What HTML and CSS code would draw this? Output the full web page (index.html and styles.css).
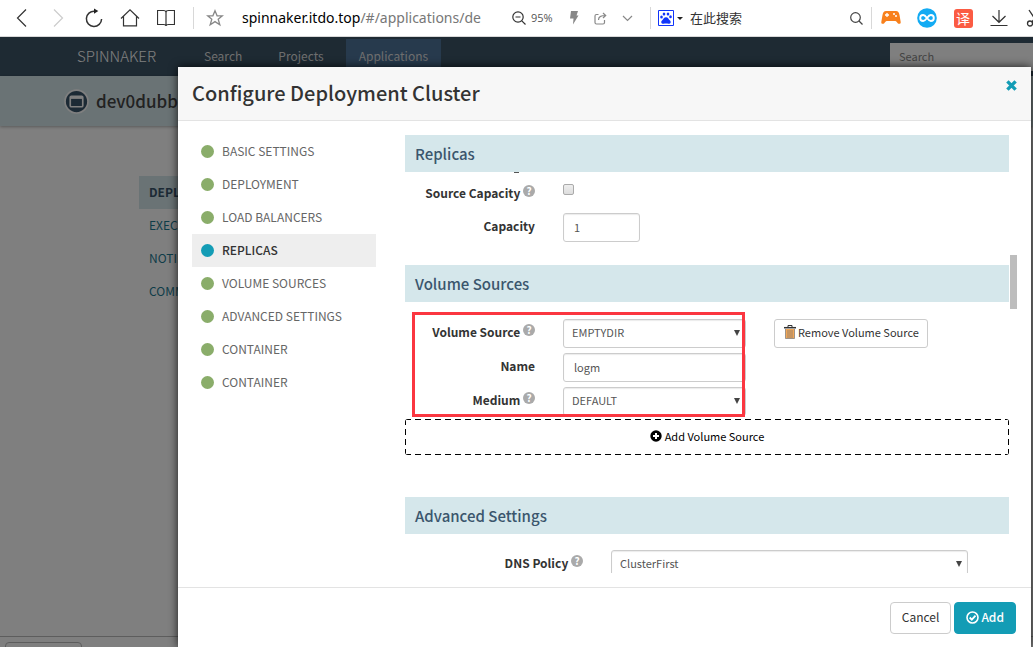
FILE: index.html
```html
<!DOCTYPE html>
<html lang="en">
<head>
<meta charset="utf-8">
<title>Configure Deployment Cluster</title>
<link rel="stylesheet" href="styles.css">
</head>
<body>
<header class="browser">
  <button class="tool" aria-label="Back"><svg width="18" height="20" viewBox="0 0 18 20"><path d="M13 1.500 4.500 10l8.500 8.500"/></svg></button>
  <button class="tool tool-off" aria-label="Forward"><svg width="18" height="20" viewBox="0 0 18 20"><path d="m5 1.500 8.500 8.500L5 18.500"/></svg></button>
  <button class="tool" aria-label="Reload"><svg width="20" height="20" viewBox="0 0 20 20"><path stroke-width="1.500" d="M10.500 3.200A7.600 7.600 0 1 0 17.600 11"/><path class="solid" d="M10 .5v5.300L14.300 3z"/></svg></button>
  <button class="tool" aria-label="Home"><svg width="20" height="20" viewBox="0 0 20 20"><path d="M1 10.500 10 1.800l9 8.700M3.500 8.500v9.300h13V8.500"/></svg></button>
  <button class="tool" aria-label="Reading list"><svg width="18" height="20" viewBox="0 0 18 20"><path d="M.5 2.500h6Q9 2.500 9 4.500 9 2.500 11.500 2.500h6v14h-6Q9 16.500 9 18 9 16.500 6.500 16.500h-6zM9 4v14"/></svg></button>
  <span class="divider"></span>
  <button class="tool tool-gray tool-star" aria-label="Bookmark"><svg width="18" height="18" viewBox="0 0 18 18"><path stroke-width="1.300" d="m9 1.800 2.100 5h5.300l-4.200 3.500 1.600 5.500L9 12.600l-4.800 3.200 1.600-5.500L1.600 6.800h5.300z"/></svg></button>
  <div class="address" role="textbox" aria-label="Address" tabindex="0">spinnaker.itdo.top<span class="path">/#/applications/de</span></div>
  <button class="zoom"><svg width="14" height="14" viewBox="0 0 14 14"><circle cx="6" cy="6" r="5.200"/><path d="m9.800 9.800 3.700 3.700M3.500 6h5"/></svg>95%</button>
  <button class="mini" aria-label="Fast mode"><svg width="12" height="14" viewBox="0 0 12 14"><path class="solid-gray" d="M3 0h7L8.500 4.500h2L5 13.500l.5-6H2z"/></svg></button>
  <button class="mini" aria-label="Share"><svg width="13" height="13" viewBox="0 0 13 13"><path d="M4.500 2.500h-2Q1 2.500 1 4v6.500Q1 12 2.500 12H9q1.500 0 1.500-1.500V8M4.500 8Q4.500 3.500 11.500 3.500M9 1l2.700 2.500L9 6"/></svg></button>
  <button class="mini" aria-label="More"><svg width="11" height="7" viewBox="0 0 11 7"><path d="m1 1 4.500 4.500L10 1"/></svg></button>
  <span class="divider"></span>
  <button class="engine" aria-label="Search engine"><svg width="16" height="16" viewBox="0 0 16 16"><path fill="#fff" stroke="#1034fa" d="M.5.5h15v15H.5z"/><g fill="#1034fa"><ellipse cx="3.500" cy="7" rx="1.300" ry="1.500"/><ellipse cx="6" cy="4" rx="1.300" ry="1.600"/><ellipse cx="10" cy="4" rx="1.300" ry="1.600"/><ellipse cx="12.500" cy="6.800" rx="1.300" ry="1.500"/><path d="M8 7.200c2 0 2.500 1.800 4 3.300 1.500 1.700.5 3.500-1.500 3.300-2-.3-3-.3-5 0C3.500 14 2.500 12 4 10.500 5.500 9 6 7.200 8 7.200z"/></g></svg><i class="caret"></i></button>
  <input class="web-search" type="text" placeholder="在此搜索" aria-label="在此搜索">
  <button class="mini find" aria-label="Find"><svg width="13" height="13" viewBox="0 0 13 13"><circle cx="5.500" cy="5.500" r="4.800"/><path d="m9 9 3.500 3.500"/></svg></button>
  <span class="divider divider-end"></span>
  <button class="ext" aria-label="Games"><svg width="20" height="16" viewBox="0 0 20 16"><path fill="#f8801c" d="M5 1h10c2 0 3 1.500 3.500 4l1.200 7c.3 2-2 2.500-3.200 1-1-1.500-1.500-2-3-2h-7c-1.500 0-2 .5-3 2-1.200 1.500-3.500 1-3.200-1L1.500 5C2 2.500 3 1 5 1z"/><path stroke="#fff" stroke-width="1.300" d="M4 5h4M6 3v4"/><circle cx="13" cy="4" r="1" fill="#fff"/><circle cx="15" cy="6" r="1" fill="#fff"/></svg></button>
  <button class="ext" aria-label="Sync"><svg width="20" height="20" viewBox="0 0 20 20"><circle cx="10" cy="10" r="9.800" fill="#13abf3"/><path fill="none" stroke="#fff" stroke-width="1.900" d="M10 10C8.500 8 7.500 7 6.200 7a3 3 0 0 0 0 6C7.500 13 8.500 12 10 10s2.500-3 3.800-3a3 3 0 0 1 0 6c-1.300 0-2.300-1-3.800-3z"/></svg></button>
  <button class="ext"><span class="translate">译</span></button>
  <button class="ext" aria-label="Downloads"><svg width="18" height="18" viewBox="0 0 18 18"><path d="M9 1v12M2.500 7 9 13.300 15.500 7M.5 16.500h17" fill="none" stroke="#333" stroke-width="1.200"/></svg></button>
  <button class="ext" aria-label="Screenshot"><svg width="20" height="20" viewBox="0 0 20 20"><path d="m4 2 8 12M16 2 7 14" fill="none" stroke="#333" stroke-width="1.300"/><circle cx="5" cy="15.500" r="2.500" fill="none" stroke="#333" stroke-width="1.300"/></svg></button>
</header>

<div class="page">
  <div class="app">
    <nav class="topbar">
      <a class="brand" href="#">SPINNAKER</a>
      <a class="top-link" href="#">Search</a>
      <a class="top-link" href="#">Projects</a>
      <a class="top-link top-active" href="#">Applications</a>
      <input class="top-search" type="text" placeholder="Search" aria-label="Search">
    </nav>
    <div class="app-head">
      <svg width="25" height="25" viewBox="0 0 24 24"><circle cx="12" cy="12" r="11" fill="#39546a" stroke="#fff" stroke-width="1.600"/><rect x="6" y="7" width="12" height="10" rx="1" fill="none" stroke="#fff" stroke-width="1.600"/><path stroke="#fff" stroke-width="2" d="M6 8.500h12"/></svg>
      <h2 class="app-name">dev0dubb</h2>
    </div>
    <nav class="side">
      <a class="side-link side-active" href="#">DEPLOYMENT</a>
      <a class="side-link" href="#">EXECUTION</a>
      <a class="side-link" href="#">NOTIFICATIONS</a>
      <a class="side-link" href="#">COMMENTS</a>
    </nav>
    <div class="app-foot"><span class="foot-box"></span></div>
  </div>
  <div class="backdrop"></div>

  <section class="modal" role="dialog" aria-labelledby="title">
    <header class="modal-head">
      <h1 class="modal-title" id="title">Configure Deployment Cluster</h1>
      <button class="close" aria-label="Close"><svg width="11" height="11" viewBox="0 0 11 11"><path stroke="#139cb5" stroke-width="3.400" d="m1.400 1.400 8.200 8.200M9.600 1.400 1.400 9.600"/></svg></button>
    </header>
    <div class="modal-body">
      <nav class="steps">
        <a class="step" href="#">BASIC SETTINGS</a>
        <a class="step" href="#">DEPLOYMENT</a>
        <a class="step" href="#">LOAD BALANCERS</a>
        <a class="step step-active" href="#">REPLICAS</a>
        <a class="step" href="#">VOLUME SOURCES</a>
        <a class="step" href="#">ADVANCED SETTINGS</a>
        <a class="step" href="#">CONTAINER</a>
        <a class="step" href="#">CONTAINER</a>
      </nav>
      <div class="scroller">
        <h3 class="section">Replicas</h3>
        <div class="fields replicas">
          <label class="label" for="source-cap">Source Capacity <span class="help">?</span></label>
          <div class="control check"><input class="tick" type="checkbox" id="source-cap"></div>
          <label class="label" for="cap">Capacity</label>
          <div class="control"><input class="box box-short" type="text" id="cap" value="1"></div>
        </div>
        <h3 class="section">Volume Sources</h3>
        <div class="volume">
          <div class="fields">
            <label class="label" for="vol">Volume Source <span class="help">?</span></label>
            <div class="control pick"><select class="box" id="vol"><option>EMPTYDIR</option></select></div>
            <button class="remove"><svg width="12" height="14" viewBox="0 0 12 14"><path fill="#f2a756" d="M1.500 4h9v9.500h-9z"/><path fill="none" stroke="#333" d="M4 2V.5h4V2"/><path fill="none" stroke="#777" stroke-width=".7" d="M1.500 4v9.500h9V4M4 5v8M6 5v8M8 5v8"/><path stroke="#333" stroke-width="1.500" d="M0 2.700h12"/></svg>Remove Volume Source</button>
          </div>
          <div class="fields">
            <label class="label" for="name">Name</label>
            <div class="control"><input class="box" type="text" id="name" value="logm"></div>
          </div>
          <div class="fields">
            <label class="label" for="medium">Medium <span class="help">?</span></label>
            <div class="control pick"><select class="box" id="medium"><option>DEFAULT</option></select></div>
          </div>
          <div class="marker"></div>
        </div>
        <button class="add-source"><svg width="12" height="12" viewBox="0 0 12 12"><circle cx="6" cy="6" r="5.700"/><path stroke="#fff" stroke-width="2" d="M6 3v6M3 6h6"/></svg>Add Volume Source</button>
        <h3 class="section">Advanced Settings</h3>
        <div class="dns">
          <label class="label" for="dns">DNS Policy <span class="help">?</span></label>
          <div class="control pick"><select class="box" id="dns"><option>ClusterFirst</option></select></div>
        </div>
        <div class="thumb"></div>
      </div>
    </div>
    <footer class="modal-foot">
      <button class="btn">Cancel</button>
      <button class="btn btn-main"><svg width="13" height="13" viewBox="0 0 13 13"><circle cx="6.500" cy="6.500" r="5.500" fill="none" stroke="#fff" stroke-width="1.600"/><path fill="none" stroke="#fff" stroke-width="1.800" d="m3.700 6.500 2.100 2.100 3.700-3.900"/></svg>Add</button>
    </footer>
  </section>
</div>
</body>
</html>
```

FILE: styles.css
```css
* { box-sizing: border-box; }

body {
  margin: 0;
  height: 100vh;
  overflow: hidden;
  display: flex;
  flex-direction: column;
  font: 12px/16px "Noto Sans CJK SC", "Open Sans", sans-serif;
  color: #333;
}

h1, h2, h3 { margin: 0; }
a { color: inherit; text-decoration: none; }
button { font: inherit; color: inherit; padding: 0; border: 0; background: none; }
svg { display: block; flex: none; }

/* browser toolbar */
.browser {
  display: flex;
  align-items: center;
  flex: none;
  height: 37px;
  padding-left: 4px;
  overflow: hidden;
  background: #fff;
  border-bottom: 1px solid #d8d8d8;
}
.tool {
  display: flex;
  flex: none;
  align-items: center;
  justify-content: center;
  width: 36px;
  height: 36px;
}
.tool svg, .mini svg, .zoom svg { fill: none; stroke: #333; stroke-width: 1.2; }
.tool-off svg { stroke: #ccc; }
.tool-gray svg { stroke: #888; }
.tool .solid { fill: #222; stroke: none; }
.divider { flex: none; width: 1px; height: 22px; margin-left: 9px; background: #d8d8d8; }
.tool-star { margin: 0 4px 0 3px; }
.address {
  flex: none;
  width: 270px;
  margin-left: 5px;
  overflow: hidden;
  white-space: nowrap;
  font: 14px/22px "Noto Sans", sans-serif;
  color: #000;
}
.path { color: #777; }
.zoom {
  display: flex;
  flex: none;
  align-items: center;
  gap: 5px;
  width: 48px;
  font: 11px/16px "Open Sans", sans-serif;
  color: #555;
}
.mini { display: flex; flex: none; justify-content: center; width: 27px; }
.mini svg { stroke: #888; }
.mini .solid-gray { fill: #888; stroke: none; }
.engine { display: flex; flex: none; align-items: center; gap: 3px; margin-left: 7px; }
.caret { border: 3px solid transparent; border-top-color: #222; border-bottom: 0; }
.web-search {
  flex: 1;
  min-width: 0;
  padding: 0 0 0 7px;
  border: 0;
  outline: 0;
  background: none;
  font: 13px/20px "Noto Sans CJK SC", sans-serif;
}
.web-search::placeholder { color: #333; }
.find svg { stroke: #444; }
.divider-end { margin: 0 1px; }
.ext { display: flex; flex: none; justify-content: center; width: 36px; }
.ext:last-child { margin-right: -20px; }
.translate {
  width: 19px;
  border-radius: 3px;
  background: #fb5b43;
  color: #fff;
  font-size: 14px;
  line-height: 19px;
}

/* dimmed application */
.page { position: relative; flex: 1; min-height: 0; overflow: hidden; }
.app { display: flex; flex-direction: column; height: 100%; background: #fff; }
.topbar { display: flex; flex: none; align-items: stretch; height: 39px; padding: 2px 0 0 77px; background: #3c5467; color: #fff; }
.brand { width: 109px; font-size: 15px; line-height: 33px; font-weight: 300; }
.top-link { padding: 0 18px; line-height: 33px; color: #ddd; }
.top-active { margin-left: 4px; padding: 0 13px; background: #4e749a; }
.top-search { width: 143px; height: 28px; margin: 4px 0 0 auto; padding: 0 9px 3px; border: 0; background: #fff; font: inherit; font-size: 11px; }
.top-search::placeholder { color: #888; }
.app-head {
  display: flex;
  flex: none;
  align-items: center;
  gap: 7px;
  height: 50px;
  padding-left: 64px;
  background: #d5e7eb;
  box-shadow: 0 1px 3px rgba(0, 0, 0, .3);
}
.app-name { font-size: 17px; line-height: 24px; font-weight: 500; color: #444; }
.side { display: flex; flex: 1; flex-direction: column; width: 39px; margin: 50px 0 0 139px; overflow: hidden; color: #1d7a92; }
.side-link { padding: 0 0 2px 10px; overflow: hidden; line-height: 31px; }
.side-active { background: #d5e7eb; color: #39546a; font-weight: 700; }
.app-foot { flex: none; height: 10px; padding: 5px; border-top: 1px solid #bbb; overflow: hidden; }
.foot-box { display: block; width: 77px; height: 20px; border: 1px solid #bbb; border-radius: 4px; }
.backdrop { position: absolute; inset: 0; background: rgba(0, 0, 0, .5); }

/* dialog */
.modal {
  position: absolute;
  inset: 30px 2px 0 178px;
  display: flex;
  flex-direction: column;
  background: #fff;
  border-radius: 2px 2px 0 0;
  box-shadow: 0 0 10px rgba(0, 0, 0, .8);
}
.modal-head {
  display: flex;
  flex: none;
  align-items: flex-start;
  justify-content: space-between;
  padding: 12px 14px 13px;
  background: #f7f7f7;
  border-bottom: 1px solid #e3e3e3;
}
.modal-title { font-size: 20px; line-height: 28px; font-weight: 500; }
.close { margin-top: 1px; }
.modal-body { display: flex; flex: 1; gap: 29px; min-height: 0; padding: 14px; }
.steps { flex: none; width: 184px; color: #666; }
.step { display: flex; align-items: flex-start; gap: 8px; padding: 0 0 2px 9px; line-height: 31px; }
.step::before { content: ""; width: 13px; height: 13px; margin-top: 10px; border-radius: 50%; background: #8aad6a; }
.step-active { background: #eee; color: #333; font-weight: 500; }
.step-active::before { background: #139cb5; }

.scroller { position: relative; flex: 1; min-width: 0; padding-right: 8px; overflow: hidden; }
.section { padding: 0 10px; background: #d5e7eb; color: #3b566d; font-size: 15px; line-height: 37px; font-weight: 500; }
.fields { display: grid; grid-template-columns: 130fr 183fr 235fr; column-gap: 28px; }
.label { padding-top: 5px; text-align: right; font-weight: 700; white-space: nowrap; }
.replicas {
  grid-template-columns: 130fr 446fr;
  row-gap: 8px;
  padding: 8px 0 23px;
  background: linear-gradient(#555, #555) 109px 0 / 5px 1px no-repeat;
}
.help {
  display: inline-block;
  width: 12px;
  height: 12px;
  border-radius: 50%;
  background: #aaa;
  color: #fff;
  font-size: 10px;
  line-height: 12px;
  text-align: center;
  vertical-align: top;
}
.check { height: 25px; padding-top: 4px; }
.tick {
  display: block;
  appearance: none;
  width: 11px;
  height: 11px;
  margin: 0;
  border: 1px solid #aaa;
  border-radius: 2px;
  background: linear-gradient(#eee, #ddd);
}
.box {
  display: block;
  appearance: none;
  width: 100%;
  height: 29px;
  padding: 0 10px 2px;
  border: 1px solid #ccc;
  border-radius: 3px;
  background: #fff;
  box-shadow: inset 0 1px 1px rgba(0, 0, 0, .08);
  color: #555;
  font: 11px/16px "Noto Sans CJK SC", sans-serif;
}
.box-short { width: 77px; }
select.box { padding: 0 8px 3px; }
.pick { position: relative; }
.pick::after {
  content: "";
  position: absolute;
  top: 11px;
  right: 6px;
  border: 3px solid transparent;
  border-top: 6px solid #444;
  border-bottom: 0;
}
.volume { position: relative; display: grid; row-gap: 5px; padding: 17px 0 3px; }
.marker { position: absolute; inset: 10px 264px 2px 7px; border: 3px solid #fb3640; pointer-events: none; }
.remove {
  display: flex;
  align-items: center;
  justify-content: center;
  justify-self: start;
  gap: 2px;
  height: 29px;
  padding: 0 8px 3px 9px;
  border: 1px solid #ccc;
  border-radius: 3px;
  background: #fff;
  font-size: 11px;
  white-space: nowrap;
}
.add-source {
  display: flex;
  align-items: center;
  justify-content: center;
  gap: 3px;
  width: 100%;
  height: 36px;
  padding-bottom: 2px;
  margin-bottom: 42px;
  border-radius: 3px;
  background:
    repeating-linear-gradient(90deg, #000 0 6px, transparent 6px 10px) top / 100% 1px no-repeat,
    repeating-linear-gradient(90deg, #000 0 6px, transparent 6px 10px) bottom / 100% 1px no-repeat,
    repeating-linear-gradient(#000 0 6px, transparent 6px 10px) left / 1px 100% no-repeat,
    repeating-linear-gradient(#000 0 6px, transparent 6px 10px) right / 1px 100% no-repeat;
  color: #000;
  font-size: 11px;
}
.dns { display: grid; grid-template-columns: 178fr 357fr; column-gap: 28px; padding: 16px 41px 0 0; }
.thumb { position: absolute; top: 120px; right: 0; width: 7px; height: 54px; background: #bdbdbd; }

.modal-foot {
  display: flex;
  flex: none;
  justify-content: flex-end;
  gap: 3px;
  padding: 14px 15px 13px;
  border-top: 1px solid #e3e3e3;
}
.btn {
  display: flex;
  align-items: center;
  gap: 2px;
  height: 32px;
  padding: 0 11px 2px;
  border: 1px solid #ccc;
  border-radius: 4px;
  background: #fff;
}
.btn-main { border-color: #139cb5; background: #139cb5; color: #fff; font-weight: 500; }
```
